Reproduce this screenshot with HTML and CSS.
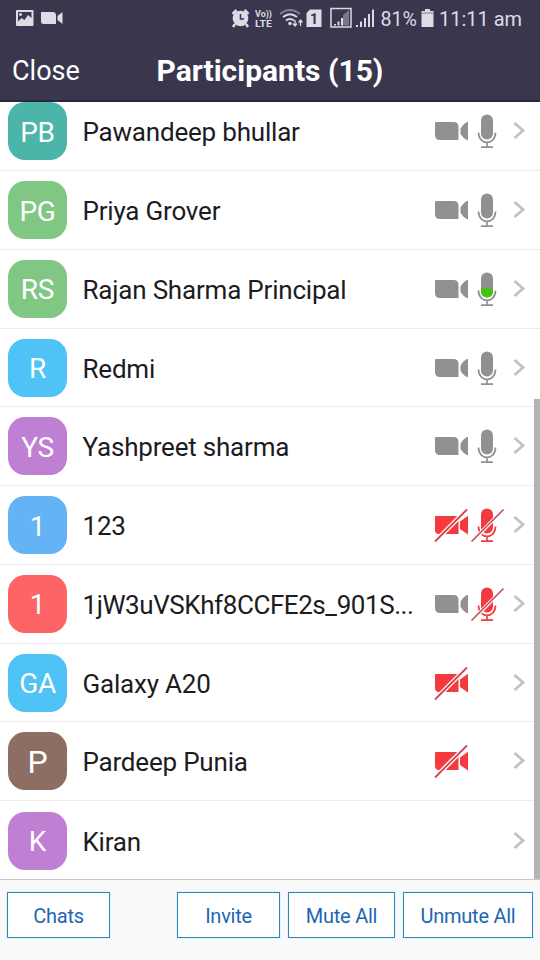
FILE: index.html
```html
<!DOCTYPE html>
<html lang="en">
<head>
<meta charset="utf-8">
<title>Participants</title>
<link rel="stylesheet" href="styles.css">
</head>
<body>
<svg class="defs" width="0" height="0">
  <symbol id="cam" viewBox="0 0 36 40">
    <path d="M3 11H20.500q5 0 5 5V29H7q-5 0-5-5V12q0-1 1-1zM27.500 17.500Q31 12 35 10.800V29.500Q31 28 27.500 23z"/>
  </symbol>
  <symbol id="cam-off" viewBox="0 0 36 40">
    <path d="M3 11H25.500V29H6q-4 0-4-4V12q0-1 1-1zM27 16.500L35 10.800V29.500L27 24z"/>
    <path d="M2 36.500L34 4.500" stroke="#fff" stroke-width="4.500"/>
    <path d="M2 36.500L34 4.500" stroke="#d9444c" stroke-width="1.800"/>
  </symbol>
  <symbol id="mic" viewBox="0 0 36 40">
    <rect x="12" y="3.500" width="12" height="25" rx="6"/>
    <path d="M9.500 21.500c0 13 17 13 17 0M18 31.500V36M12 36.200H24" fill="none" stroke="currentColor" stroke-width="1.700"/>
  </symbol>
  <symbol id="mic-off" viewBox="0 0 36 40">
    <use href="#mic"/>
    <path d="M3 36.500L34.500 4.500" stroke="#fff" stroke-width="3.500"/>
    <path d="M2.500 36.500L34.500 4.500" stroke="#c4525f" stroke-width="1.700"/>
  </symbol>
  <symbol id="chev" viewBox="0 0 14 24">
    <path d="M2.500 4L11 11.500L2.500 19" fill="none" stroke="#c2c2c2" stroke-width="2.800"/>
  </symbol>
</svg>

<header class="top">
  <div class="status">
    <svg class="status-left" viewBox="0 0 52 36">
      <path fill-rule="evenodd" d="M3 10H18.500q1 0 1 1V25q0 1-1 1H3q-1 0-1-1V11q0-1 1-1zM4 12V21.500L7.500 18L10.500 20L14 15L17.500 18V12zM6.500 13a1.500 1.500 0 1 0 .1 0z"/>
      <path d="M27 12H38.500q3.500 0 3.500 3V24H29.500q-2.500 0-2.500-2zM43.500 16L48.500 12V24L43.500 20z"/>
    </svg>
    <svg class="status-right" viewBox="0 0 300 36">
      <circle cx="10.500" cy="18.500" r="7.800"/>
      <path d="M2.500 14L6.500 10M18.500 14L14.500 10M5 24L3 27M16 24L18 27" stroke="#dddbe6" stroke-width="2.500"/>
      <path d="M10.500 14V19H14" fill="none" stroke="#39364d" stroke-width="1.600"/>
      <text x="25" y="16.500" font-size="8.500" font-weight="700" textLength="17" lengthAdjust="spacingAndGlyphs">Vo))</text>
      <text x="25" y="27" font-size="9" font-weight="700" textLength="17" lengthAdjust="spacingAndGlyphs">LTE</text>
      <g fill="none" stroke="#dddbe6" stroke-width="2">
        <path d="M50 14Q60 6 70 14" opacity=".45"/>
        <path d="M53 17Q60 11.500 67 17M56 20.500Q60 17.500 64 20.500"/>
        <path d="M65 20V26M63 23.500L65 26L67 23.500M70.500 26V20M68.500 22.500L70.500 20L72.500 22.500" stroke-width="1.300"/>
      </g>
      <circle cx="60" cy="23.500" r="1.800"/>
      <path d="M80 9.500H91.500V27H76.500V13z"/>
      <text class="sim" x="80" y="23.500" font-size="14" font-weight="700">1</text>
      <rect x="101" y="8.500" width="20" height="18.500" fill="none" stroke="#dddbe6" stroke-width="1.500"/>
      <path d="M104 24h2v1.500h-2zM107.500 21.500h2v4h-2zM111 18h2v7.500h-2z"/>
      <path d="M113 15l6-5V25.500h-6z" opacity=".4"/>
      <path d="M126 25h2v2h-2zM130 21.500h2V27h-2zM134 18h2v9h-2zM138 14h2v13h-2zM142 9.500h2V27h-2z"/>
      <text x="150.500" y="26" font-size="21" textLength="36.500" lengthAdjust="spacingAndGlyphs">81%</text>
      <path d="M195 9h5v2h3.500v16H191.500V11H195z"/>
      <path d="M192 13H203" stroke="#39364d" opacity=".6"/>
      <text x="209" y="26" font-size="21" textLength="83" lengthAdjust="spacingAndGlyphs">11:11 am</text>
    </svg>
  </div>
  <div class="nav"><span class="close">Close</span><h1>Participants (15)</h1></div>
</header>

<main class="list">
  <div class="rows">
    <div class="row"><span class="av teal">PB</span><span class="name">Pawandeep bhullar</span><svg class="ic"><use href="#cam"/></svg><svg class="ic"><use href="#mic"/></svg><svg class="chev"><use href="#chev"/></svg></div>
    <div class="row"><span class="av green">PG</span><span class="name">Priya Grover</span><svg class="ic"><use href="#cam"/></svg><svg class="ic"><use href="#mic"/></svg><svg class="chev"><use href="#chev"/></svg></div>
    <div class="row"><span class="av green">RS</span><span class="name">Rajan Sharma Principal</span><svg class="ic"><use href="#cam"/></svg><svg class="ic" viewBox="0 0 36 40"><use href="#mic"/><path d="M12 19.500H24V22.500a6 6 0 0 1-12 0z" fill="#43c40d"/></svg><svg class="chev"><use href="#chev"/></svg></div>
    <div class="row"><span class="av sky">R</span><span class="name">Redmi</span><svg class="ic"><use href="#cam"/></svg><svg class="ic"><use href="#mic"/></svg><svg class="chev"><use href="#chev"/></svg></div>
    <div class="row"><span class="av purple">YS</span><span class="name">Yashpreet sharma</span><svg class="ic"><use href="#cam"/></svg><svg class="ic"><use href="#mic"/></svg><svg class="chev"><use href="#chev"/></svg></div>
    <div class="row"><span class="av blue">1</span><span class="name">123</span><svg class="ic off"><use href="#cam-off"/></svg><svg class="ic off"><use href="#mic-off"/></svg><svg class="chev"><use href="#chev"/></svg></div>
    <div class="row"><span class="av red">1</span><span class="name long">1jW3uVSKhf8CCFE2s_901S...</span><svg class="ic"><use href="#cam"/></svg><svg class="ic off"><use href="#mic-off"/></svg><svg class="chev"><use href="#chev"/></svg></div>
    <div class="row"><span class="av sky">GA</span><span class="name">Galaxy A20</span><svg class="ic off"><use href="#cam-off"/></svg><span class="ic"></span><svg class="chev"><use href="#chev"/></svg></div>
    <div class="row"><span class="av brown">P</span><span class="name">Pardeep Punia</span><svg class="ic off"><use href="#cam-off"/></svg><span class="ic"></span><svg class="chev"><use href="#chev"/></svg></div>
    <div class="row"><span class="av purple">K</span><span class="name">Kiran</span><svg class="chev"><use href="#chev"/></svg></div>
  </div>
  <div class="scrollbar"></div>
</main>

<footer class="bar">
  <button class="btn chats">Chats</button>
  <button class="btn invite">Invite</button>
  <button class="btn mute">Mute All</button>
  <button class="btn unmute">Unmute All</button>
</footer>
</body>
</html>
```
FILE: styles.css
```css
* { box-sizing: border-box; }
body {
  margin: 0;
  width: 540px;
  height: 960px;
  display: flex;
  flex-direction: column;
  overflow: hidden;
  background: #fff;
  font-family: Roboto, "Liberation Sans", sans-serif;
}
.defs { position: absolute; }
.top { height: 102px; background: #39364d; border-bottom: 2px solid #2b2741; }
.status { display: flex; justify-content: space-between; height: 36px; padding-left: 14px; }
.status-left { width: 52px; height: 36px; fill: #dddbe6; }
.status-right { width: 300px; height: 36px; margin-right: 10px; fill: #dddbe6; }
.status-right .sim { fill: #39364d; }
.nav {
  display: grid;
  grid-template-columns: 100px 340px 100px;
  align-items: center;
  height: 69px;
  color: #fff;
}
.close { padding-left: 12px; font-size: 27px; }
h1 { margin: 0; text-align: center; font-size: 30px; font-weight: 700; white-space: nowrap; }
.list { position: relative; height: 778px; overflow: hidden; border-bottom: 1px solid #c6c5c9; }
.rows { margin-top: -9.600px; }
.row {
  display: flex;
  align-items: center;
  height: 78.75px;
  padding: 0 14px 0 8px;
  border-bottom: 1px solid #ececee;
}
.row:last-child { border-bottom: 0; }
.av {
  display: flex;
  align-items: center;
  justify-content: center;
  width: 59px;
  height: 58px;
  border-radius: 17px;
  color: #fff;
  font-size: 28px;
  letter-spacing: -.3px;
  padding-top: 2px;
}
.name { flex: 1; padding: 2px 0 0 15.500px; font-size: 26px; letter-spacing: -.2px; color: #1c1c1f; white-space: nowrap; }
.long { letter-spacing: -.43px; }
.ic { flex: none; width: 36px; height: 40px; color: #919191; fill: currentColor; }
.off { color: #f43a3e; }
.chev { flex: none; width: 14px; height: 24px; margin-left: 7px; }
.teal { background: #4cb5a9; }
.green { background: #81c784; }
.sky { background: #4fc2f6; }
.purple { background: #bf7fd3; }
.blue { background: #63b3f6; }
.red { background: #fc6466; }
.brown { background: #8c6e63; font-size: 32px; }
.scrollbar { position: absolute; right: 0; top: 297px; width: 6px; height: 481px; background: #b4b4b6; }
.bar { display: flex; gap: 8px; height: 80px; padding: 12px 7px 0; background: #f9f9fa; }
.btn {
  height: 46px;
  padding: 2px 0 0;
  border: 1.500px solid #2f86b5;
  outline: 1px solid #dcf7fd;
  background: #fff;
  color: #1d66b3;
  font: 20px Roboto, "Liberation Sans", sans-serif;
  letter-spacing: -.25px;
}
.chats { width: 103px; margin-right: auto; }
.invite { width: 103px; }
.mute { width: 107px; }
.unmute { width: 130px; }
```
